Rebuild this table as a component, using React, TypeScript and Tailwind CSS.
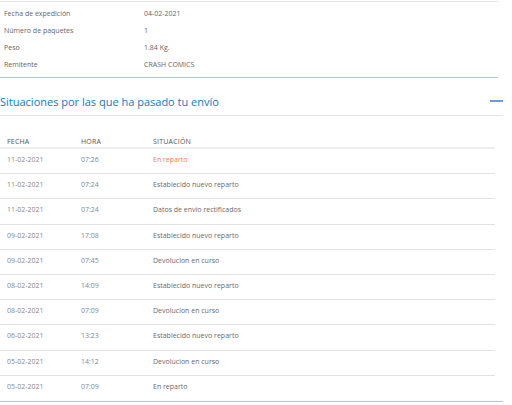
import React from "react";

const info = [
  ["Fecha de expedición", "04-02-2021"],
  ["Número de paquetes", "1"],
  ["Peso", "1.84 Kg."],
  ["Remitente", "CRASH COMICS"],
];

const rows = [
  ["11-02-2021", "07:26", "En reparto", true],
  ["11-02-2021", "07:24", "Establecido nuevo reparto", false],
  ["11-02-2021", "07:24", "Datos de envio rectificados", false],
  ["09-02-2021", "17:08", "Establecido nuevo reparto", false],
  ["09-02-2021", "07:45", "Devolucion en curso", false],
  ["08-02-2021", "14:09", "Establecido nuevo reparto", false],
  ["08-02-2021", "07:09", "Devolucion en curso", false],
  ["06-02-2021", "13:23", "Establecido nuevo reparto", false],
  ["05-02-2021", "14:12", "Devolucion en curso", false],
  ["05-02-2021", "07:09", "En reparto", false],
] as const;

export default function App() {
  return (
    <div
      className="w-[512px] h-[405px] bg-white overflow-hidden text-[#666]"
      style={{ fontFamily: '"Open Sans", "Noto Sans", sans-serif' }}
    >
      <div className="w-[498px] border-t border-[#e6e6e6] mt-px pt-[3px]">
        {info.map(([k, v]) => (
          <div key={k} className="flex h-[17px] items-center text-[7px] leading-none">
            <div className="w-[144px] pl-[4px]">{k}</div>
            <div>{v}</div>
          </div>
        ))}
      </div>
      <div className="w-[498px] h-px bg-[#b3c6da] mt-[4px]" />
      <div className="w-[503px] flex items-center justify-between h-[38px] pt-[15px] border-b border-[#e4e4e4]">
        <div className="text-[11px] leading-none text-[#1479c0] -mt-[6px]">
          Situaciones por las que ha pasado tu envío
        </div>
        <div className="w-[13px] h-[2px] bg-[#6d9bd4] -mt-[6px]" />
      </div>
      <div className="w-[495px] mt-[19px]">
        <div className="flex items-center h-[14px] text-[7px] leading-none tracking-[0.2px] text-[#555] border-b-2 border-[#eeeeee]">
          <div className="w-[81px] pl-[7px]">FECHA</div>
          <div className="w-[72px]">HORA</div>
          <div>SITUACIÓN</div>
        </div>
        {rows.map(([f, h, s, hi], i) => (
          <div
            key={i}
            className={`flex items-start pt-[7px] h-[25.2px] text-[7px] leading-none ${
              i < rows.length - 1 ? "border-b border-[#e2e2e2]" : ""
            }`}
          >
            <div className="w-[81px] pl-[7px] text-[#888]">{f}</div>
            <div className="w-[72px] text-[#888]">{h}</div>
            <div className={hi ? "text-[#f08250]" : "text-[#6a6a6a]"}>{s}</div>
          </div>
        ))}
      </div>
      <div className="w-[503px] h-px bg-[#b3c6da]" />
    </div>
  );
}
